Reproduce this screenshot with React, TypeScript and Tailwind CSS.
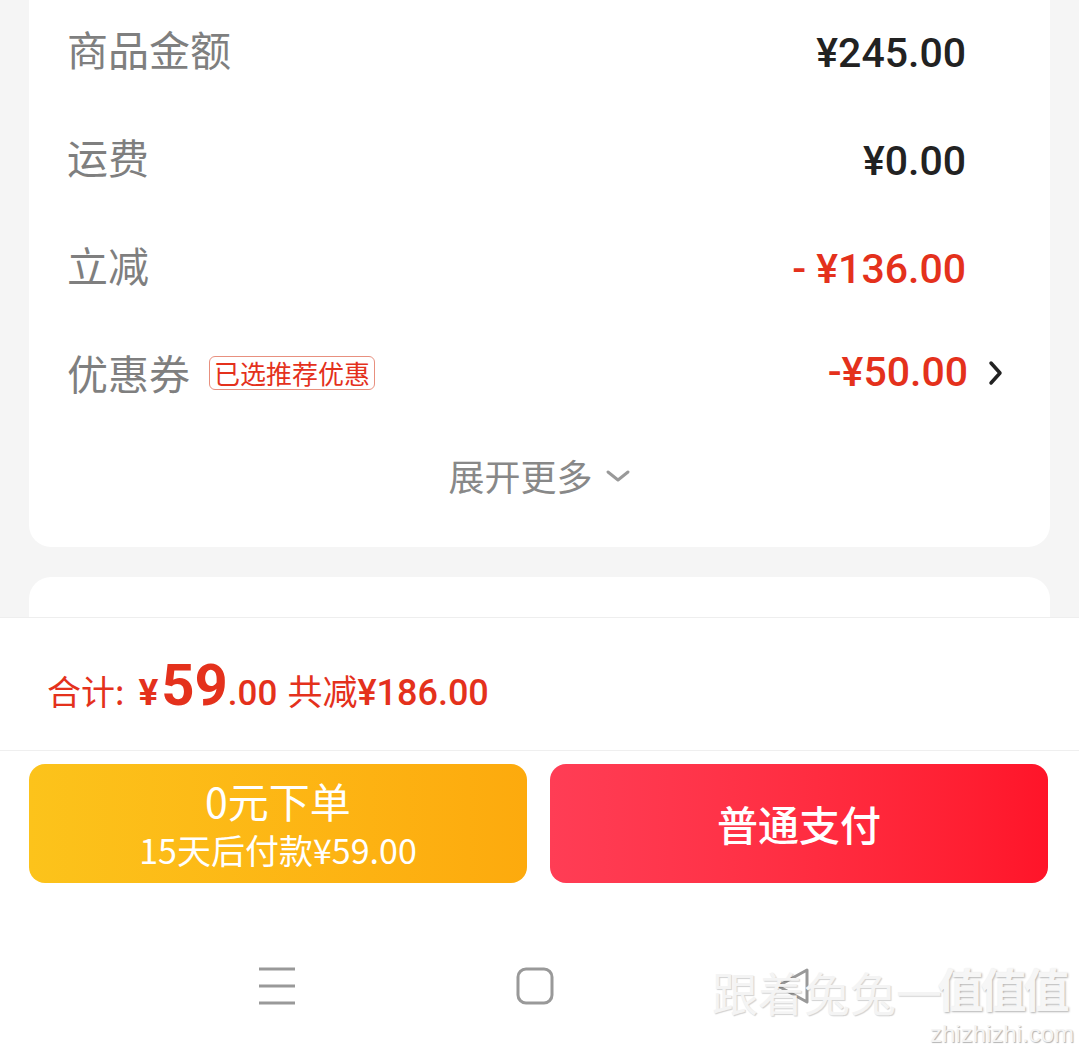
import React from 'react'

const cjk = "font-['Noto_Sans_CJK_SC',sans-serif]"
const num = "font-['Roboto','Noto_Sans_CJK_SC',sans-serif]"

function Row({ label, children, extra }: { label: string; children: React.ReactNode; extra?: React.ReactNode }) {
  return (
    <div className="h-[108px] flex items-center pl-[38px] pr-[46px]">
      <span className={`${cjk} text-[41px] text-[#7f7f7f] leading-none`}>{label}</span>
      {extra}
      <div className="ml-auto flex items-center mt-[11px]">{children}</div>
    </div>
  )
}

export default function App() {
  return (
    <div className="relative w-[1079px] h-[1052px] bg-[#f5f5f5] flex flex-col overflow-hidden">
      {/* Scroll content */}
      <div className="h-[617px] px-[29px] overflow-hidden">
        <div className="bg-white rounded-b-[22px] h-[547px] flex flex-col">
          <div className="-mt-[6px]">
            <Row label="商品金额">
              <span className={`${num} text-[41px] font-medium text-[#222] mr-[38px]`}>¥245.00</span>
            </Row>
            <Row label="运费">
              <span className={`${num} text-[41px] font-medium text-[#222] mr-[38px]`}>¥0.00</span>
            </Row>
            <Row label="立减">
              <span className={`${num} text-[41px] font-medium text-[#e4311c] mr-[38px]`}>-&nbsp;¥136.00</span>
            </Row>
            <Row
              label="优惠券"
              extra={
                <span className={`${cjk} ml-[19px] mt-[1px] px-[4px] h-[34px] flex items-center border border-[#e8907f] rounded-[6px] text-[26px] text-[#e4311c] leading-none`}>
                  已选推荐优惠
                </span>
              }
            >
              <span className={`${num} text-[41px] font-medium text-[#e4311c] -mt-[10px]`}>-¥50.00</span>
              <svg width="16" height="26" viewBox="0 0 16 26" className="ml-[20px] -mt-[10px]" fill="none" stroke="#222" strokeWidth="3.5" strokeLinecap="round" strokeLinejoin="round">
                <path d="M3 3l9 10-9 10" />
              </svg>
            </Row>
          </div>
          <div className="flex items-center justify-center mt-[31px]">
            <span className={`${cjk} text-[36px] text-[#888] leading-none`}>展开更多</span>
            <svg width="26" height="14" viewBox="0 0 26 14" className="ml-[12px] mt-[2px]" fill="none" stroke="#999" strokeWidth="3" strokeLinecap="round" strokeLinejoin="round">
              <path d="M3 3l10 8 10-8" />
            </svg>
          </div>
        </div>
        <div className="bg-white rounded-t-[22px] h-[80px] mt-[30px]" />
      </div>

      {/* Bottom bar */}
      <div className="bg-white border-t border-[#eeeeee] flex-1 flex flex-col">
        <div className="h-[133px] flex items-center pl-[47px] pt-[8px] border-b border-[#efefef]">
          <div className="flex items-baseline text-[#e4311c]">
            <span className={`${cjk} text-[34px]`}>合计:</span>
            <span className={`${num} text-[37px] font-bold ml-[14px]`}>¥</span>
            <span className={`${num} text-[58px] font-bold leading-none ml-[3px]`}>59</span>
            <span className={`${num} text-[35px] font-medium`}>.00</span>
            <span className={`${cjk} text-[35px] ml-[10px]`}>共减</span>
            <span className={`${num} text-[36px] font-medium`}>¥186.00</span>
          </div>
        </div>

        <div className="flex gap-[23px] px-[29px] pt-[13px]">
          <button className="w-[498px] h-[119px] rounded-[16px] bg-gradient-to-r from-[#fcc31b] to-[#fdaa0d] flex flex-col items-center justify-center text-white">
            <span className={`${cjk} text-[41px] leading-[44px]`}>0元下单</span>
            <span className={`${cjk} text-[34px] leading-[38px] mt-[9px]`}>15天后付款¥59.00</span>
          </button>
          <button className="w-[498px] h-[119px] rounded-[16px] bg-gradient-to-r from-[#ff3d55] to-[#ff1429] flex items-center justify-center text-white">
            <span className={`${cjk} text-[41px] font-medium leading-none`}>普通支付</span>
          </button>
        </div>

        {/* Navigation bar */}
        <div className="flex-1 flex items-start justify-center gap-[220px] pt-[84px] pr-[9px]">
          <svg width="38" height="38" viewBox="0 0 38 38" fill="none" stroke="#999" strokeWidth="3">
            <path d="M1 2h36M1 19h36M1 36h36" />
          </svg>
          <svg width="38" height="38" viewBox="0 0 38 38" fill="none" stroke="#999" strokeWidth="3">
            <rect x="2" y="2" width="34" height="34" rx="8" />
          </svg>
          <svg width="38" height="38" viewBox="0 0 38 38" fill="none" stroke="#999" strokeWidth="3" strokeLinejoin="round" strokeLinecap="round">
            <path d="M33 3L4 19l29 16z" />
          </svg>
        </div>
      </div>

      {/* Watermark */}
      <div className="absolute left-[712px] top-[968px] pointer-events-none select-none">
        <span className={`${cjk} text-[46px] text-[#f4f4f4] leading-none [text-shadow:1px_1px_1px_rgba(0,0,0,0.18)]`}>跟着兔兔一</span>
      </div>
      <div className="absolute left-[932px] top-[964px] w-[140px] flex flex-col items-center gap-[12px] pointer-events-none select-none">
        <span className={`${cjk} text-[46px] font-bold text-[#f6f6f6] leading-[46px] tracking-[-3px] [text-shadow:1px_1px_2px_rgba(0,0,0,0.3)]`}>值值值</span>
        <span className="font-['Liberation_Sans',sans-serif] text-[24px] text-[#f4f4f4] leading-[24px] [text-shadow:1px_1px_1px_rgba(0,0,0,0.3)]">zhizhizhi.com</span>
      </div>
    </div>
  )
}
